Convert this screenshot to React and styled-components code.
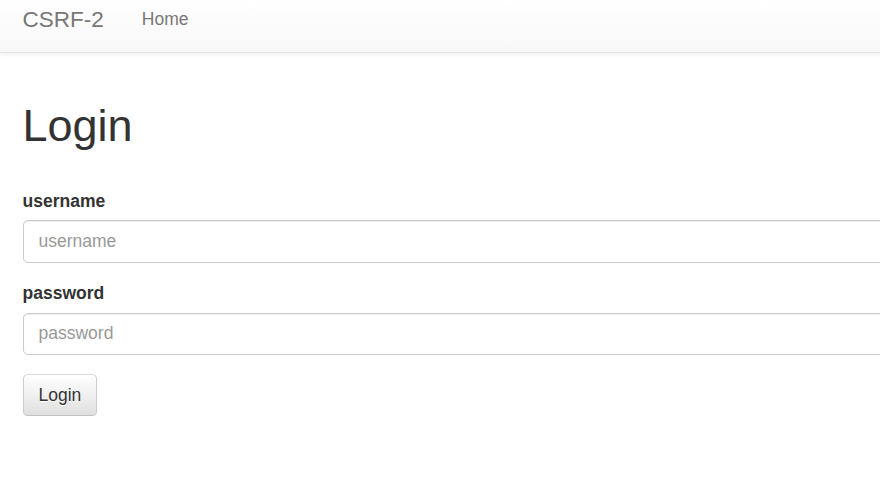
import React from "react";
import styled, { createGlobalStyle } from "styled-components";

const GlobalStyle = createGlobalStyle`
  html, body {
    margin: 0;
    padding: 0;
    overflow: hidden;
    background: #fff;
  }
  body {
    font-family: "Liberation Sans", Arial, sans-serif;
    font-size: 17.5px;
    line-height: 1.42857;
    color: #333;
  }
  * {
    box-sizing: border-box;
  }
`;

const Page = styled.div`
  width: 1300px;
`;

const Navbar = styled.nav`
  display: flex;
  align-items: flex-start;
  height: 53px;
  padding: 6.5px 0 0 22.5px;
  background-image: linear-gradient(to bottom, #fff 0, #f8f8f8 100%);
  border-bottom: 1px solid #e3e3e3;
  box-shadow: inset 0 1px 0 rgba(255, 255, 255, 0.15),
    0 1px 5px rgba(0, 0, 0, 0.075);
`;

const Brand = styled.a`
  font-size: 22.5px;
  line-height: 25px;
  color: #777;
  text-decoration: none;
  text-shadow: 0 1px 0 rgba(255, 255, 255, 0.25);
  margin-right: 38px;
`;

const NavLink = styled.a`
  font-size: 17.5px;
  line-height: 25px;
  color: #777;
  text-decoration: none;
  text-shadow: 0 1px 0 rgba(255, 255, 255, 0.25);
`;

const Main = styled.main`
  padding: 48px 0 0 22.5px;
`;

const Title = styled.h1`
  font-size: 45px;
  line-height: 49.5px;
  font-weight: 500;
  color: #333;
  margin: 0 0 38.25px;
`;

const Form = styled.form`
  display: flex;
  flex-direction: column;
  align-items: flex-start;
`;

const FormGroup = styled.div`
  width: 100%;
  margin-bottom: 18.75px;
`;

const Label = styled.label`
  display: inline-block;
  font-weight: bold;
  line-height: 25px;
  margin-bottom: 6.25px;
  color: #333;
`;

const Input = styled.input`
  display: block;
  width: 100%;
  height: 42.5px;
  padding: 7.5px 15px;
  font-family: inherit;
  font-size: 17.5px;
  line-height: 25px;
  color: #555;
  background: #fff;
  border: 1px solid #ccc;
  border-radius: 5px;
  box-shadow: inset 0 1px 1px rgba(0, 0, 0, 0.075);
  outline: none;
  &::placeholder {
    color: #999;
  }
`;

const Button = styled.button`
  height: 42.5px;
  padding: 7.5px 15px;
  font-family: inherit;
  font-size: 17.5px;
  line-height: 25px;
  color: #333;
  background-image: linear-gradient(to bottom, #fff 0, #e0e0e0 100%);
  border: 1px solid #ccc;
  border-color: #dbdbdb #ccc #c4c4c4;
  border-radius: 5px;
  text-shadow: 0 1px 0 #fff;
  box-shadow: inset 0 1px 0 rgba(255, 255, 255, 0.15),
    0 1px 1px rgba(0, 0, 0, 0.075);
  cursor: pointer;
`;

const App = () => {
  return (
    <>
      <GlobalStyle />
      <Page>
        <Navbar>
          <Brand href="#">CSRF-2</Brand>
          <NavLink href="#">Home</NavLink>
        </Navbar>
        <Main>
          <Title>Login</Title>
          <Form onSubmit={(e) => e.preventDefault()}>
            <FormGroup>
              <Label htmlFor="username">username</Label>
              <Input id="username" type="text" placeholder="username" />
            </FormGroup>
            <FormGroup>
              <Label htmlFor="password">password</Label>
              <Input id="password" type="password" placeholder="password" />
            </FormGroup>
            <Button type="submit">Login</Button>
          </Form>
        </Main>
      </Page>
    </>
  );
};

export default App;
